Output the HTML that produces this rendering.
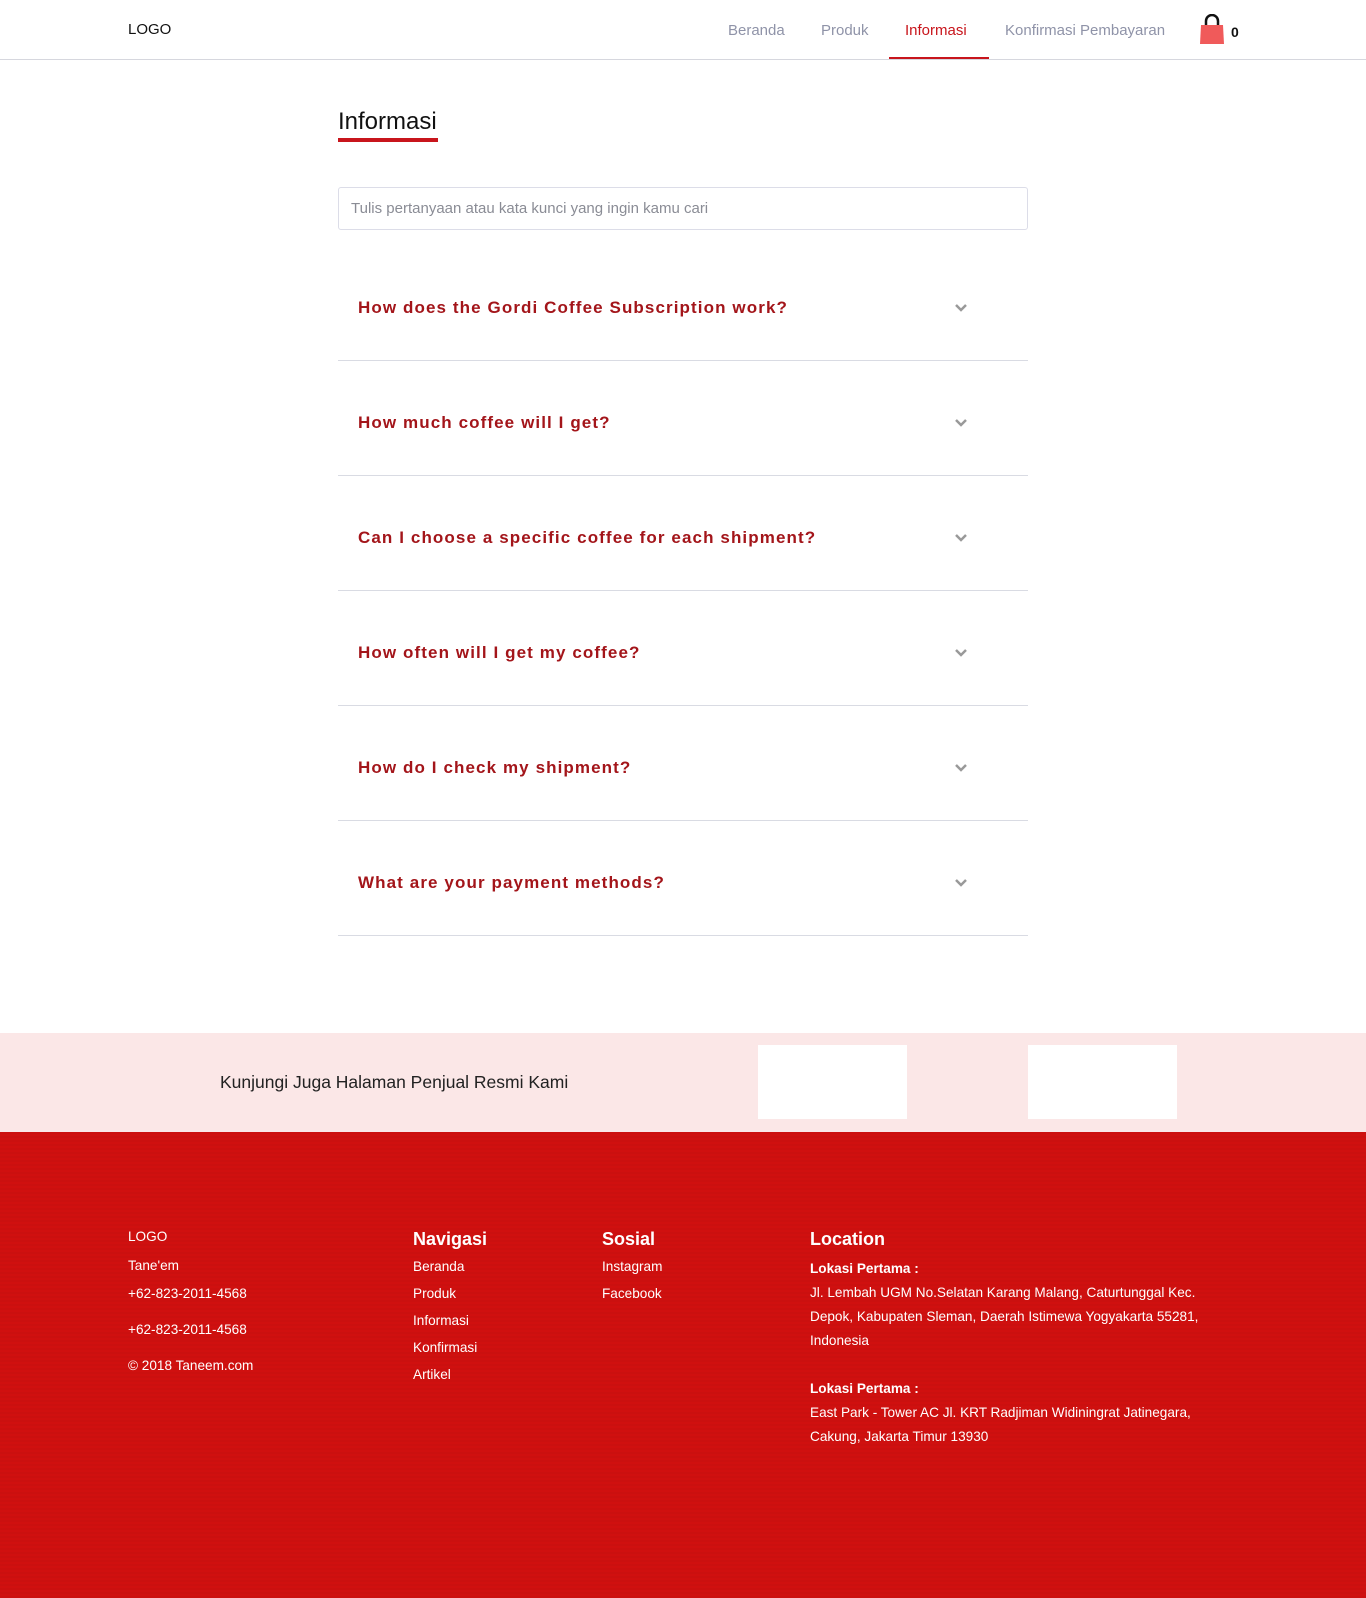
<!DOCTYPE html>
<html><head><meta charset="utf-8"><style>
*{margin:0;padding:0;box-sizing:border-box}
body{width:1366px;height:1598px;font-family:"Liberation Sans",sans-serif;background:#fff;position:relative;overflow:hidden;color:#222}
.a{position:absolute;white-space:nowrap}
.nav{font-size:15px;color:#8f93a8;top:22px}
.q{left:358px;font-size:17px;font-weight:bold;color:#a3151a;letter-spacing:1.1px}
.sep{position:absolute;left:338px;width:690px;height:1px;background:#d9dbe3}
.chev{position:absolute;left:954px;width:14px;height:10px}
.f{color:#fff;font-size:13.6px}
.fh{color:#fff;font-size:18px;font-weight:bold}
</style></head><body>
<div class="a" style="left:128px;top:21px;font-size:15px;color:#111">LOGO</div>
<div class="a nav" style="left:728px">Beranda</div>
<div class="a nav" style="left:821px">Produk</div>
<div class="a nav" style="left:905px;color:#c8151c">Informasi</div>
<div class="a nav" style="left:1005px">Konfirmasi Pembayaran</div>
<div style="position:absolute;left:889px;top:57px;width:100px;height:3px;background:#c8151c"></div>
<div style="position:absolute;left:0;top:59px;width:1366px;height:1px;background:#d6d7de"></div>
<svg style="position:absolute;left:1199px;top:14px" width="26" height="31" viewBox="0 0 26 31"><path d="M7 12V7a6 6 0 0 1 12 0v5" fill="none" stroke="#111" stroke-width="2.5"/><path d="M2 11h22l1 19H1z" fill="#f05a5a"/></svg>
<div class="a" style="left:1231px;top:24px;font-size:14px;font-weight:bold;color:#111">0</div>

<div class="a" style="left:338px;top:108px;font-size:24px;color:#111">Informasi</div>
<div style="position:absolute;left:338px;top:138px;width:100px;height:4px;background:#c8151c"></div>
<div style="position:absolute;left:338px;top:187px;width:690px;height:43px;border:1px solid #dcdde8;border-radius:3px"></div>
<div class="a" style="left:351px;top:200px;font-size:15px;color:#8a8c95">Tulis pertanyaan atau kata kunci yang ingin kamu cari</div>

<div class="a q" style="top:298px">How does the Gordi Coffee Subscription work?</div>
<div class="sep" style="top:360px"></div>
<div class="a q" style="top:413px">How much coffee will I get?</div>
<div class="sep" style="top:475px"></div>
<div class="a q" style="top:528px">Can I choose a specific coffee for each shipment?</div>
<div class="sep" style="top:590px"></div>
<div class="a q" style="top:643px">How often will I get my coffee?</div>
<div class="sep" style="top:705px"></div>
<div class="a q" style="top:758px">How do I check my shipment?</div>
<div class="sep" style="top:820px"></div>
<div class="a q" style="top:873px">What are your payment methods?</div>
<div class="sep" style="top:935px"></div>
<svg class="chev" style="top:303px" viewBox="0 0 14 10"><path d="M2 2l5 5 5-5" fill="none" stroke="#999" stroke-width="2.5"/></svg>
<svg class="chev" style="top:418px" viewBox="0 0 14 10"><path d="M2 2l5 5 5-5" fill="none" stroke="#999" stroke-width="2.5"/></svg>
<svg class="chev" style="top:533px" viewBox="0 0 14 10"><path d="M2 2l5 5 5-5" fill="none" stroke="#999" stroke-width="2.5"/></svg>
<svg class="chev" style="top:648px" viewBox="0 0 14 10"><path d="M2 2l5 5 5-5" fill="none" stroke="#999" stroke-width="2.5"/></svg>
<svg class="chev" style="top:763px" viewBox="0 0 14 10"><path d="M2 2l5 5 5-5" fill="none" stroke="#999" stroke-width="2.5"/></svg>
<svg class="chev" style="top:878px" viewBox="0 0 14 10"><path d="M2 2l5 5 5-5" fill="none" stroke="#999" stroke-width="2.5"/></svg>

<div style="position:absolute;left:0;top:1033px;width:1366px;height:99px;background:#fbe7e7"></div>
<div class="a" style="left:220px;top:1072px;font-size:17.5px;color:#222">Kunjungi Juga Halaman Penjual Resmi Kami</div>
<div style="position:absolute;left:758px;top:1045px;width:149px;height:74px;background:#fff"></div>
<div style="position:absolute;left:1028px;top:1045px;width:149px;height:74px;background:#fff"></div>

<div style="position:absolute;left:0;top:1132px;width:1366px;height:466px;background-color:#d0100f;background-image:repeating-linear-gradient(0deg,rgba(0,0,0,0.025) 0 2px,transparent 2px 4px)"></div>
<div class="a f" style="left:128px;top:1229px">LOGO</div>
<div class="a f" style="left:128px;top:1258px">Tane'em</div>
<div class="a f" style="left:128px;top:1286px">+62-823-2011-4568</div>
<div class="a f" style="left:128px;top:1322px">+62-823-2011-4568</div>
<div class="a f" style="left:128px;top:1358px">© 2018 Taneem.com</div>
<div class="a fh" style="left:413px;top:1229px">Navigasi</div>
<div class="a f" style="left:413px;top:1259px">Beranda</div>
<div class="a f" style="left:413px;top:1286px">Produk</div>
<div class="a f" style="left:413px;top:1313px">Informasi</div>
<div class="a f" style="left:413px;top:1340px">Konfirmasi</div>
<div class="a f" style="left:413px;top:1367px">Artikel</div>
<div class="a fh" style="left:602px;top:1229px">Sosial</div>
<div class="a f" style="left:602px;top:1259px">Instagram</div>
<div class="a f" style="left:602px;top:1286px">Facebook</div>
<div class="a fh" style="left:810px;top:1229px">Location</div>
<div class="a f" style="left:810px;top:1261px;font-weight:bold">Lokasi Pertama :</div>
<div class="a f" style="left:810px;top:1285px">Jl. Lembah UGM No.Selatan Karang Malang, Caturtunggal Kec.</div>
<div class="a f" style="left:810px;top:1309px">Depok, Kabupaten Sleman, Daerah Istimewa Yogyakarta 55281,</div>
<div class="a f" style="left:810px;top:1333px">Indonesia</div>
<div class="a f" style="left:810px;top:1381px;font-weight:bold">Lokasi Pertama :</div>
<div class="a f" style="left:810px;top:1405px">East Park - Tower AC Jl. KRT Radjiman Widiningrat Jatinegara,</div>
<div class="a f" style="left:810px;top:1429px">Cakung, Jakarta Timur 13930</div>
</body></html>
